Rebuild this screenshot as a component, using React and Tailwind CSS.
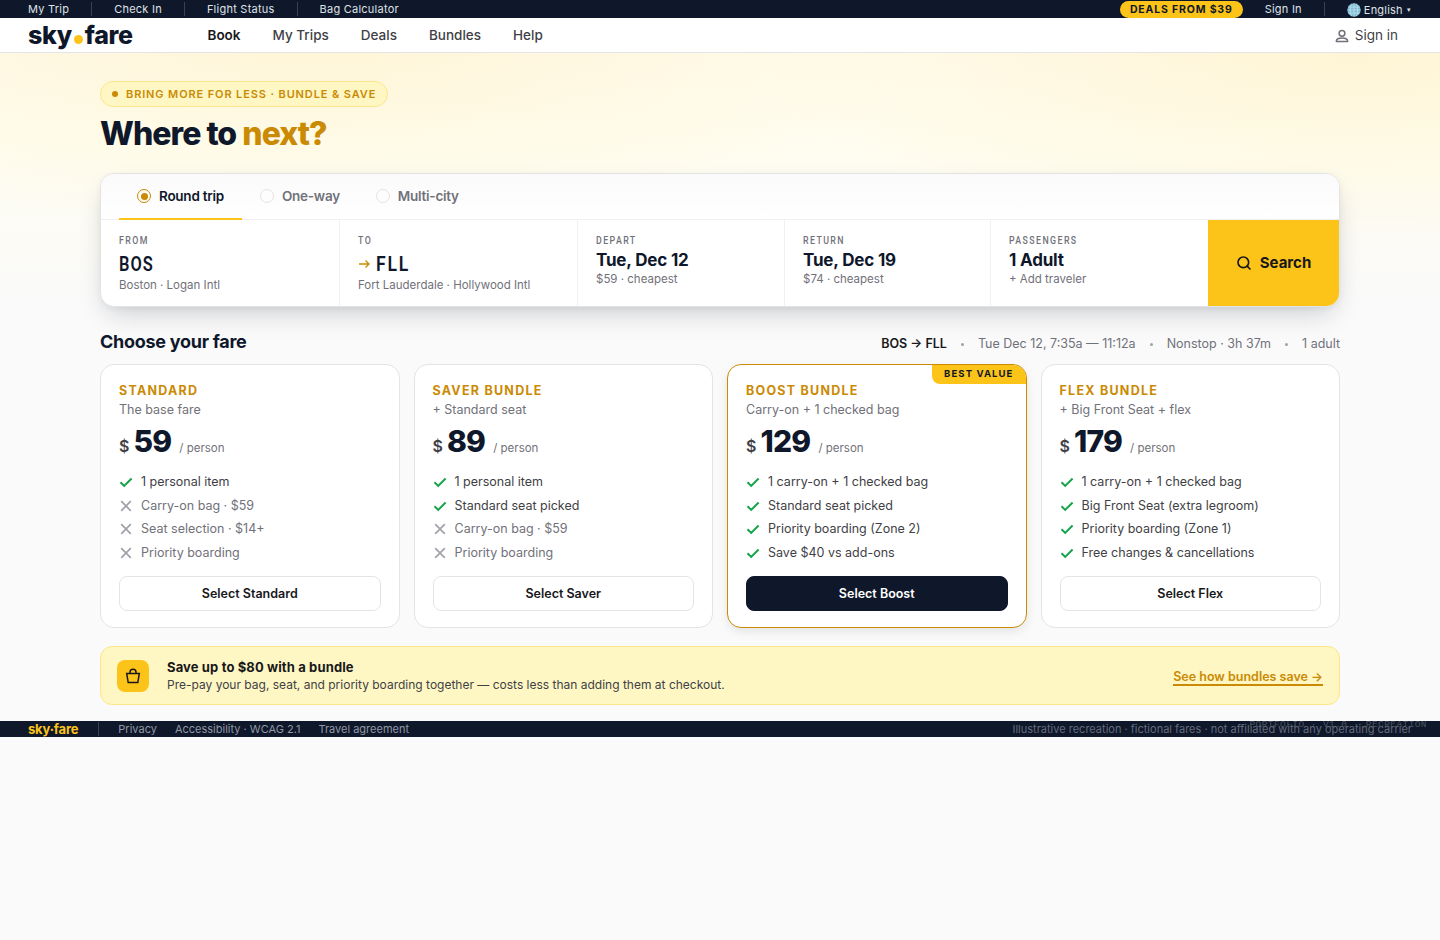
import React from 'react';
import { Search } from 'lucide-react';

const topLinks = ['My Trip', 'Check In', 'Flight Status', 'Bag Calculator'];

const navLinks = ['Book', 'My Trips', 'Deals', 'Bundles', 'Help'];

const tripTypes = ['Round trip', 'One-way', 'Multi-city'];

const fares = [
  {
    name: 'Standard',
    tagline: 'The base fare',
    price: 59,
    cta: 'Select Standard',
    features: [
      { text: '1 personal item', included: true },
      { text: 'Carry-on bag · $59', included: false },
      { text: 'Seat selection · $14+', included: false },
      { text: 'Priority boarding', included: false },
    ],
  },
  {
    name: 'Saver Bundle',
    tagline: '+ Standard seat',
    price: 89,
    cta: 'Select Saver',
    features: [
      { text: '1 personal item', included: true },
      { text: 'Standard seat picked', included: true },
      { text: 'Carry-on bag · $59', included: false },
      { text: 'Priority boarding', included: false },
    ],
  },
  {
    name: 'Boost Bundle',
    tagline: 'Carry-on + 1 checked bag',
    price: 129,
    cta: 'Select Boost',
    best: true,
    features: [
      { text: '1 carry-on + 1 checked bag', included: true },
      { text: 'Standard seat picked', included: true },
      { text: 'Priority boarding (Zone 2)', included: true },
      { text: 'Save $40 vs add-ons', included: true },
    ],
  },
  {
    name: 'Flex Bundle',
    tagline: '+ Big Front Seat + flex',
    price: 179,
    cta: 'Select Flex',
    features: [
      { text: '1 carry-on + 1 checked bag', included: true },
      { text: 'Big Front Seat (extra legroom)', included: true },
      { text: 'Priority boarding (Zone 1)', included: true },
      { text: 'Free changes & cancellations', included: true },
    ],
  },
];

function GlobeIcon() {
  return (
    <svg width="14" height="14" viewBox="0 0 14 14" fill="none">
      <circle cx="7" cy="7" r="6.7" fill="#7fbcd6" />
      <path
        d="M.5 7h13M1.3 4h11.4M1.3 10h11.4M7 .3v13.4M4.6.8C2.9 4.5 2.9 9.5 4.6 13.2M9.4.8c1.7 3.7 1.7 8.7 0 12.4"
        stroke="#d3ebf3"
        strokeWidth=".6"
      />
    </svg>
  );
}

function TopBar() {
  return (
    <div className="flex h-[18px] items-center justify-between bg-[#0f172a] px-7 text-[11px] tracking-[0.24px] text-[#dfe2e8]">
      <div className="flex items-center">
        {topLinks.map((link, i) => (
          <React.Fragment key={link}>
            {i > 0 && <span className="mx-[22px] h-[14px] w-px bg-[#394152]" />}
            <a>{link}</a>
          </React.Fragment>
        ))}
      </div>
      <div className="flex items-center">
        <span className="mt-px flex h-[17px] items-center rounded-full bg-[#fcc419] px-[10px] text-[10.5px] font-bold tracking-[0.84px] text-[#0f172a]">
          DEALS FROM $39
        </span>
        <a className="ml-[22px]">Sign In</a>
        <span className="mx-[22px] h-[14px] w-px bg-[#394152]" />
        <span className="mt-[2px] mr-px flex items-center gap-[3px]">
          <GlobeIcon />
          <span className="tracking-[0.2px]">English</span>
          <span className="ml-px text-[7px]">▾</span>
        </span>
      </div>
    </div>
  );
}

function Header() {
  return (
    <header className="flex h-[35px] items-center border-b border-[#e4e4e7] bg-white px-7">
      <div className="flex w-[179.5px] items-center text-[25px] font-extrabold leading-none tracking-[-0.35px] text-[#0f172a]">
        <span>sky</span>
        <span className="mx-[2px] mt-[9px] size-[9px] rounded-full bg-[#fcc419]" />
        <span>fare</span>
      </div>
      <nav className="flex gap-8 text-[13.5px] text-[#3f3f46]">
        {navLinks.map((link, i) => (
          <a key={link} className={i === 0 ? 'font-semibold text-[#18181b]' : 'font-medium'}>
            {link}
          </a>
        ))}
      </nav>
      <a className="ml-auto mr-[14px] flex items-center gap-[6px] text-[13.5px] text-[#3f3f46]">
        <svg className="mt-px" width="14" height="14" viewBox="0 0 14 14" fill="none" stroke="#71717a" strokeWidth="1.5">
          <circle cx="7" cy="4.3" r="2.9" />
          <path d="M1.3 12.4c0-2.5 2.2-3.4 5.7-3.4s5.7.9 5.7 3.4z" strokeLinejoin="round" />
        </svg>
        Sign in
      </a>
    </header>
  );
}

function Field({ label, children, note, last }) {
  return (
    <div className={`px-[18px] pt-4 ${last ? '' : 'border-r border-[#f0f0f2]'}`}>
      <div className="origin-left scale-x-[0.88] font-['Roboto',sans-serif] text-[10px] font-medium leading-[10px] tracking-[1.6px] text-[#71717a]">
        {label}
      </div>
      {children}
      <div className="text-[11.5px] leading-[14px] text-[#71717a]">{note}</div>
    </div>
  );
}

function SearchCard() {
  return (
    <section className="mt-[22px] h-[134px] overflow-hidden rounded-[14px] border border-[#e4e4e7] bg-white shadow-[0_12px_28px_-8px_rgba(15,23,42,0.22),0_2px_6px_rgba(15,23,42,0.05)]">
      <div className="flex h-[46px] border-b border-[#f0f0f2] bg-linear-to-b from-[#fafafa] to-white px-[18px]">
        {tripTypes.map((type, i) => (
          <div
            key={type}
            className={`flex h-[46px] items-center gap-2 px-[18px] text-[13.5px] font-semibold tracking-[-0.25px] ${
              i === 0 ? 'border-b-2 border-[#fcc419] text-[#0f172a]' : 'border-b-2 border-transparent text-[#71717a]'
            }`}
          >
            <span
              className={`flex size-[14px] items-center justify-center rounded-full border ${
                i === 0 ? 'border-[#ca8a04]' : 'border-[#e4e4e7]'
              }`}
            >
              {i === 0 && <span className="size-[7px] rounded-full bg-[#ca8a04]" />}
            </span>
            {type}
          </div>
        ))}
      </div>
      <div className="grid h-[86px] grid-cols-[239fr_238fr_207fr_206fr_217fr_131fr]">
        <Field label="FROM" note="Boston · Logan Intl">
          <div className="mt-[6px] mb-[2px] origin-left scale-x-[0.82] font-['Roboto',sans-serif] text-[20px] font-semibold leading-6 tracking-[1.2px] text-[#0f172a]">
            BOS
          </div>
        </Field>
        <Field label="TO" note="Fort Lauderdale · Hollywood Intl">
          <div className="mt-[6px] mb-[2px] flex items-center gap-[6px] font-['Roboto',sans-serif] text-[20px] font-semibold leading-6 text-[#0f172a]">
            <svg width="12" height="12" viewBox="0 0 12 12" fill="none" stroke="#ca8a04" strokeWidth="1.3">
              <path d="M1 6h10M7.5 2.5L11 6 7.5 9.5" />
            </svg>
            <span className="origin-left scale-x-[0.88] tracking-[2px]">FLL</span>
          </div>
        </Field>
        <Field label="DEPART" note="$59 · cheapest">
          <div className="mt-[3px] mb-px text-[17px] font-bold leading-[22px] tracking-[-0.17px] text-[#0f172a]">Tue, Dec 12</div>
        </Field>
        <Field label="RETURN" note="$74 · cheapest">
          <div className="mt-[3px] mb-px text-[17px] font-bold leading-[22px] tracking-[-0.17px] text-[#0f172a]">Tue, Dec 19</div>
        </Field>
        <Field label="PASSENGERS" note="+ Add traveler" last>
          <div className="mt-[3px] mb-px text-[17px] font-bold leading-[22px] tracking-[-0.17px] text-[#0f172a]">1 Adult</div>
        </Field>
        <button className="flex items-center justify-center gap-2 bg-[#fcc419] text-[15px] font-bold text-[#18181b]">
          <Search size={16} strokeWidth={2.5} />
          Search
        </button>
      </div>
    </section>
  );
}

function FeatureIcon({ included }) {
  return included ? (
    <svg className="mt-[2px]" width="14" height="14" viewBox="0 0 14 14" fill="none" stroke="#16a34a" strokeWidth="2">
      <path d="M1.5 7.2l3.7 3.7L12.6 3.5" />
    </svg>
  ) : (
    <svg className="mt-[2px]" width="14" height="14" viewBox="0 0 14 14" fill="none" stroke="#a1a1aa" strokeWidth="1.7">
      <path d="M2.2 2.2l9.6 9.6M11.8 2.2l-9.6 9.6" />
    </svg>
  );
}

function FareCard({ fare }) {
  return (
    <article
      className={`relative h-[264px] overflow-hidden rounded-[14px] border bg-white px-[18px] pt-[18px] ${
        fare.best ? 'border-[#ca8a04] shadow-[0_4px_12px_-2px_rgba(15,23,42,0.12)]' : 'border-[#e4e4e7]'
      }`}
    >
      {fare.best && (
        <span className="absolute top-0 right-0 flex h-[19px] items-center rounded-bl-[8px] bg-[#fcc419] px-3 text-[9.5px] font-bold tracking-[1.1px] text-[#0f172a]">
          BEST VALUE
        </span>
      )}
      <h3 className="text-[12.5px] font-bold uppercase leading-4 tracking-[1.25px] text-[#ca8a04]">{fare.name}</h3>
      <p className="mt-[3px] text-[12.5px] leading-4 text-[#71717a]">{fare.tagline}</p>
      <div className="mt-[5px] flex h-9 items-baseline leading-9 text-[#0f172a]">
        <span className="text-[16px] font-semibold text-[#3f3f46]">$</span>
        <span className="ml-1 text-[30px] font-extrabold tracking-[-0.75px]">{fare.price}</span>
        <span className="ml-[8px] text-[11.5px] text-[#71717a]">/ person</span>
      </div>
      <ul className="mt-[14px] flex flex-col">
        {fare.features.map((f) => (
          <li
            key={f.text}
            className={`flex h-[23.7px] items-start gap-2 text-[12.5px] leading-[18px] ${
              f.included ? 'text-[#3f3f46]' : 'text-[#71717a]'
            }`}
          >
            <FeatureIcon included={f.included} />
            {f.text}
          </li>
        ))}
      </ul>
      <button
        className={`mt-[8px] h-[35px] w-full rounded-[8px] border pt-[2px] text-[12.5px] font-semibold ${
          fare.best ? 'border-[#0f172a] bg-[#0f172a] text-white' : 'border-[#e4e4e7] text-[#18181b]'
        }`}
      >
        {fare.cta}
      </button>
    </article>
  );
}

function Promo() {
  return (
    <section className="mt-[18px] flex h-[59px] items-center rounded-[12px] border border-[#fde68a] bg-[#fef7c3] px-4">
      <div className="flex size-8 items-center justify-center rounded-[8px] bg-[#fcc419]">
        <svg width="16" height="16" viewBox="0 0 16 16" fill="none" stroke="#18181b" strokeWidth="1.5">
          <path d="M1.7 5.5h12.6l-1.5 9H3.2zM5 5.5V4.2a3 3 0 0 1 6 0v1.3" />
        </svg>
      </div>
      <div className="ml-[18px]">
        <div className="text-[13px] font-bold leading-[18px] tracking-[0.13px] text-[#18181b]">Save up to $80 with a bundle</div>
        <div className="text-[12px] leading-[17px] text-[#3f3f46]">
          Pre-pay your bag, seat, and priority boarding together — costs less than adding them at checkout.
        </div>
      </div>
      <a className="ml-auto border-b-2 border-[#ca8a04] pt-[3px] text-[12.5px] font-semibold leading-[15px] text-[#ca8a04]">
        See how bundles save →
      </a>
    </section>
  );
}

function Footer() {
  return (
    <footer className="relative mt-4 flex h-4 items-center bg-[#0f172a] px-7 text-[11px] text-[#9298a5]">
      <span className="pt-px text-[13px] font-bold tracking-[-0.18px] text-[#fcc419]">sky·fare</span>
      <span className="ml-5 mr-[19px] h-[14px] w-px bg-[#394152]" />
      <div className="flex gap-[18px]">
        <a>Privacy</a>
        <a>Accessibility · WCAG 2.1</a>
        <a>Travel agreement</a>
      </div>
      <span className="ml-auto text-[#646c7c]">
        Illustrative recreation · fictional fares · not affiliated with any operating carrier
      </span>
      <span className="absolute right-[13px] top-[-1px] whitespace-pre font-['Liberation_Mono',monospace] text-[9.5px] leading-[10px] tracking-[0.42px] text-[#4b5261]">
        PORTFOLIO · V1.0 · RECREATION
      </span>
    </footer>
  );
}

function App() {
  return (
    <div className="min-h-[940px] bg-[#fafafa] font-['Inter',sans-serif] text-[#18181b]">
      <TopBar />
      <Header />
      <div className="bg-[radial-gradient(600px_200px_at_94%_0%,rgba(252,196,25,0.1),transparent),radial-gradient(600px_180px_at_22%_0%,rgba(252,196,25,0.09),transparent),linear-gradient(180deg,#fffaeb_0px,#fffdf0_90px,#fafafa_250px)]">
        <main className="mx-auto w-[1240px] pt-7">
          <div className="flex h-[26px] w-[288px] items-center rounded-full border border-[#fde68a] bg-[#fef7c3] pl-[11px] text-[11px] font-semibold tracking-[0.88px] text-[#ca8a04]">
            <span className="mr-2 size-[6px] rounded-full bg-[#ca8a04]" />
            BRING MORE FOR LESS · BUNDLE &amp; SAVE
          </div>
          <h1 className="mt-[9px] text-[32px] font-extrabold leading-[35px] tracking-[-0.96px] text-[#0f172a]">
            Where to <span className="text-[#ca8a04]">next?</span>
          </h1>
          <SearchCard />
          <div className="mt-[23px] flex h-6 items-center justify-between">
            <h2 className="-mt-[2px] text-[18px] font-bold tracking-[-0.27px] text-[#0f172a]">Choose your fare</h2>
            <div className="mt-1 flex items-center text-[12.5px] text-[#71717a]">
              <span className="font-semibold text-[#18181b]">BOS → FLL</span>
              <span className="mx-[14px] size-[3px] rounded-full bg-[#a1a1aa]" />
              <span>Tue Dec 12, 7:35a — 11:12a</span>
              <span className="mx-[14px] size-[3px] rounded-full bg-[#a1a1aa]" />
              <span>Nonstop · 3h 37m</span>
              <span className="mx-[14px] size-[3px] rounded-full bg-[#a1a1aa]" />
              <span>1 adult</span>
            </div>
          </div>
          <div className="mt-[10px] grid grid-cols-4 gap-[14px]">
            {fares.map((fare) => (
              <FareCard key={fare.name} fare={fare} />
            ))}
          </div>
          <Promo />
        </main>
      </div>
      <Footer />
    </div>
  );
}

export default App;
